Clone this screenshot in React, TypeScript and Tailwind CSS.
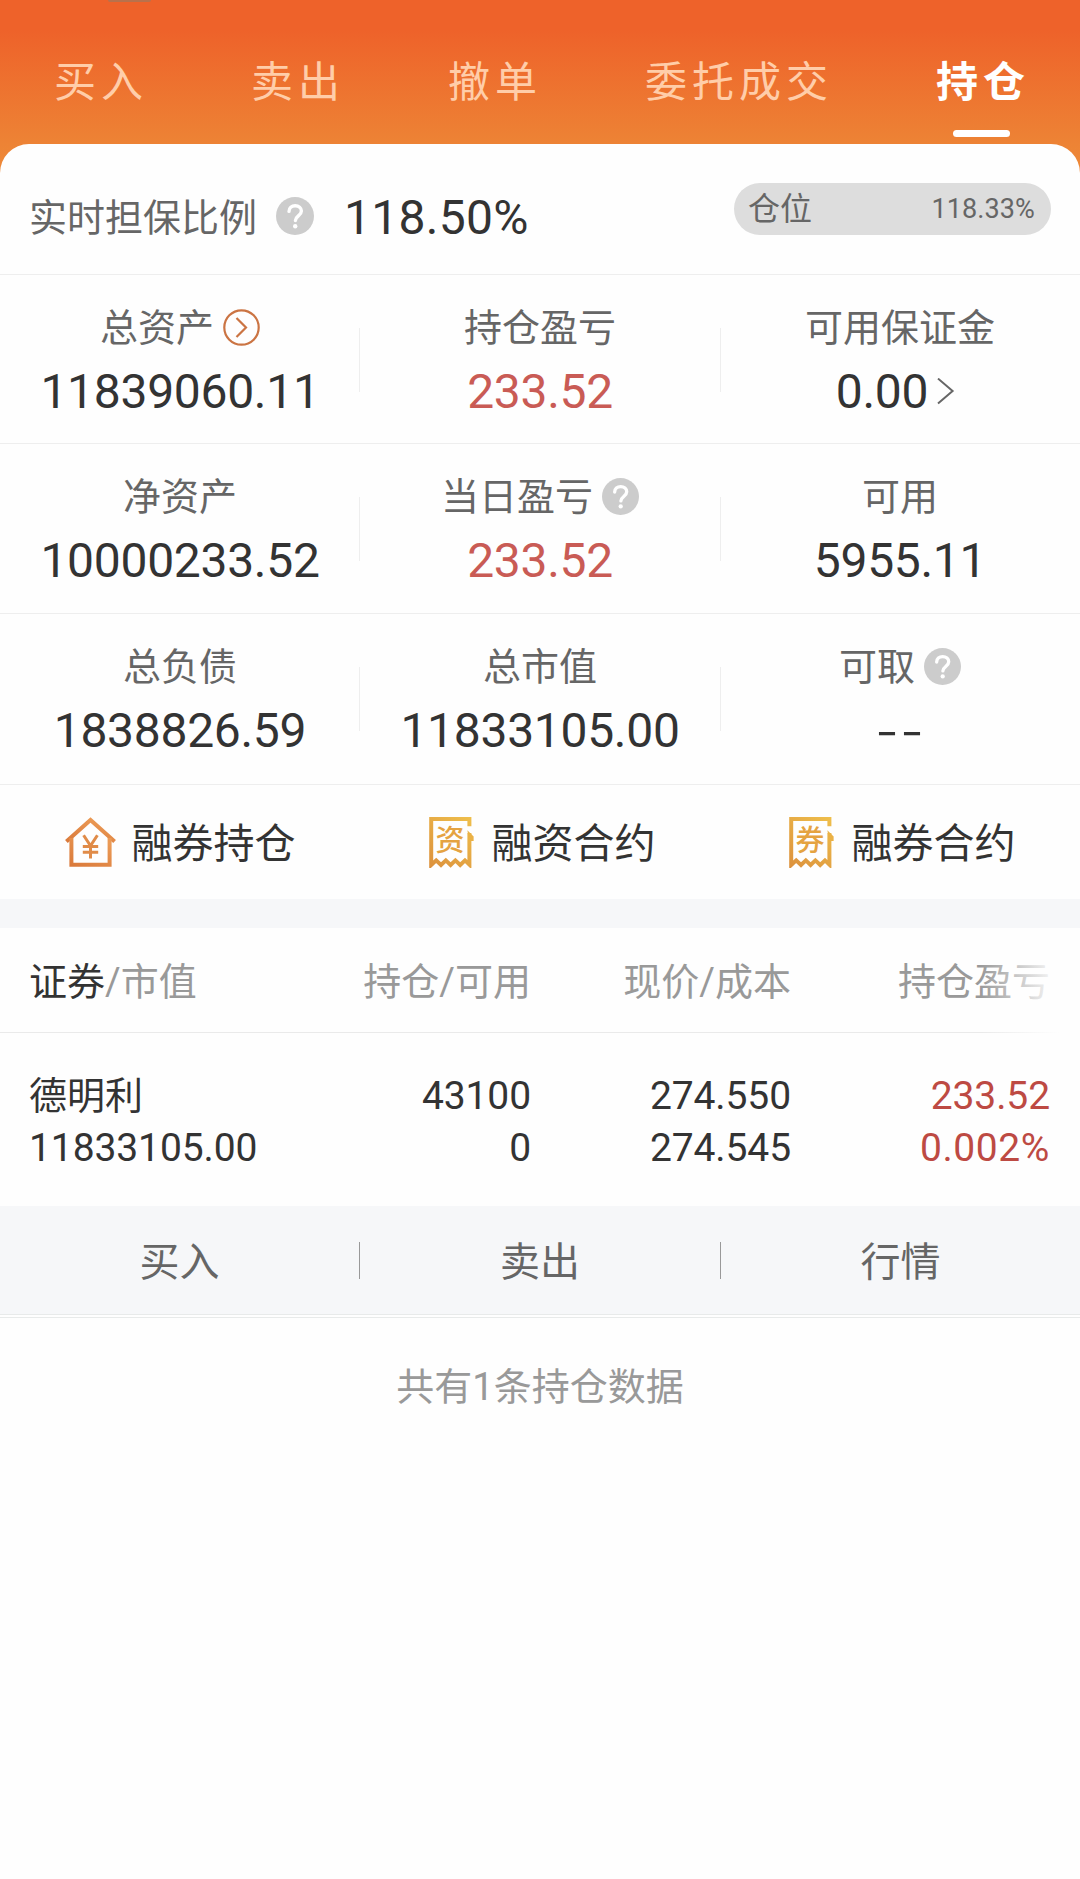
import React, { useState } from 'react';
import classnames from 'clsx';

interface CellType {
  label: string;
  value: string;
  red?: boolean;
  help?: boolean;
  more?: boolean;
  link?: boolean;
}

const tabs = ['买入', '卖出', '撤单', '委托成交', '持仓'];

const assets: { height: string; cells: CellType[] }[] = [
  {
    height: 'h-[169px]',
    cells: [
      { label: '总资产', value: '11839060.11', more: true },
      { label: '持仓盈亏', value: '233.52', red: true },
      { label: '可用保证金', value: '0.00', link: true },
    ],
  },
  {
    height: 'h-[170px]',
    cells: [
      { label: '净资产', value: '10000233.52' },
      { label: '当日盈亏', value: '233.52', red: true, help: true },
      { label: '可用', value: '5955.11' },
    ],
  },
  {
    height: 'h-[171px]',
    cells: [
      { label: '总负债', value: '1838826.59' },
      { label: '总市值', value: '11833105.00' },
      { label: '可取', value: '--', help: true },
    ],
  },
];

const HelpIcon: React.FC<{ className: string }> = ({ className }) => (
  <svg className={classnames('shrink-0', className)} viewBox="0 0 38 38" fill="none">
    <circle cx="19" cy="19" r="19" fill="#cccccc" />
    <path
      d="M13 14.4c0-3.4 2.7-5.6 6.2-5.6s6.2 2.2 6.2 5.3c0 4.6-6 5-6 9.4"
      stroke="#fff"
      strokeWidth="3.4"
      strokeLinecap="round"
    />
    <circle cx="19.2" cy="29.2" r="2.2" fill="#fff" />
  </svg>
);

const MoreIcon: React.FC = () => (
  <svg className="-mt-px size-[37px] shrink-0" viewBox="0 0 37 37" fill="none" stroke="#cb7443" strokeWidth="2.2">
    <circle cx="18.5" cy="18.5" r="17.2" />
    <path d="M13.5 9l9.5 9.5-9.5 9.5" />
  </svg>
);

const HouseIcon: React.FC = () => (
  <svg className="size-[51px] shrink-0" viewBox="0 0 51 51" fill="none">
    <defs>
      <linearGradient id="house" x1="0.7" y1="0" x2="0" y2="1">
        <stop offset="0" stopColor="#eb9a55" />
        <stop offset="1" stopColor="#da7a3b" />
      </linearGradient>
    </defs>
    <g stroke="url(#house)" strokeWidth="4">
      <path d="M1.4 24.6L25.5 3l24.1 21.6" />
      <path d="M6.4 21v26.8h38.2V21" />
    </g>
    <path
      d="M18.6 18.2l6.9 10.6 6.9-10.6M25.5 28v13.6M17.8 29.4h15.4M17.8 35.2h15.4"
      stroke="#e08b48"
      strokeWidth="3"
    />
  </svg>
);

const BillIcon: React.FC<{ text: string }> = ({ text }) => (
  <svg className="size-[51px] shrink-0" viewBox="0 0 51 51" fill="none">
    <defs>
      <linearGradient id="bill" gradientUnits="userSpaceOnUse" x1="46" y1="0" x2="4" y2="50">
        <stop offset="0" stopColor="#efbf4c" />
        <stop offset="1" stopColor="#dc913c" />
      </linearGradient>
    </defs>
    <path
      d="M44.4 9.2V2H6.2V48L11.2 43.4L16 48L20.8 43.4L25.6 48L30.4 43.4L35.2 48L40 43.4L44.4 47.6V16"
      stroke="url(#bill)"
      strokeWidth="4"
    />
    <path d="M42.4 13.2L48.6 19.4V24H44Z" fill="#eab146" />
    <text
      x="25"
      y="34"
      textAnchor="middle"
      className="font-['Noto_Sans_CJK_SC',sans-serif] text-[29px] font-medium"
      fill="#e5a341"
    >
      {text}
    </text>
  </svg>
);

const AssetCell: React.FC<{ cell: CellType }> = ({ cell }) => (
  <div className="flex w-[360px] flex-col items-center pt-[34px]">
    <div className="flex h-[38px] items-center gap-[9px] text-[38px] leading-[38px] text-[#666]">
      <span>{cell.label}</span>
      {cell.more && <MoreIcon />}
      {cell.help && <HelpIcon className="-mt-[2px] size-[37px]" />}
    </div>
    <div
      className={classnames('mt-[20px] flex h-[50px] items-center leading-[50px]', {
        'text-[#c95b55]': cell.red,
        'text-[#333]': !cell.red,
        "font-['Inter',sans-serif] text-[53px] font-light tracking-[1px]": cell.value === '--',
        'text-[48px] tracking-[-0.3px]': cell.value !== '--',
        'pr-[9px]': cell.link,
      })}
    >
      {cell.value}
      {cell.link && (
        <svg className="ml-[9px] h-[28px] w-[18px]" viewBox="0 0 18 28" fill="none">
          <path d="M1 0.6L15.6 13 1 25.4" stroke="#666" strokeWidth="2" />
        </svg>
      )}
    </div>
  </div>
);

const App: React.FC = () => {
  const [active, setActive] = useState('持仓');

  return (
    <div className="h-[1879px] w-[1080px] overflow-hidden bg-[#fefefe] font-['Roboto','Noto_Sans_CJK_SC',sans-serif]">
      {/* tabs */}
      <div className="relative h-[174px] bg-[linear-gradient(180deg,#ee622a_0px,#ee622a_30px,#ed8335_144px,#ee8a38_174px)]">
        <div className="absolute top-0 left-[108px] h-[2px] w-[43px] rounded-b bg-[#b9714c]" />
        <div className="flex gap-[103px] pl-[54px]">
          {tabs.map((tab) => (
            <button
              key={tab}
              className={classnames('relative h-[144px] pt-[20px] text-[42px] tracking-[5px] whitespace-nowrap', {
                'font-bold text-white': tab === active,
                'text-[#ffcda9]': tab !== active,
              })}
              onClick={() => setActive(tab)}
            >
              {tab}
              {tab === active && (
                <div className="absolute top-[130px] left-[17px] h-[7px] w-[57px] rounded-full bg-white" />
              )}
            </button>
          ))}
        </div>
      </div>

      {/* summary */}
      <div className="relative -mt-[30px] rounded-t-[29px] bg-[#fefefe]">
        <div className="flex h-[131px] items-start border-b border-[#eee] pr-[29px] pl-[29px]">
          <div className="mt-[55px] flex h-[38px] items-center">
            <span className="text-[38px] leading-[38px] text-[#666]">实时担保比例</span>
            <HelpIcon className="-mt-[4px] ml-[19px] size-[38px]" />
            <span className="ml-[30px] text-[48px] leading-[48px] tracking-[0.3px] text-[#333]">118.50%</span>
          </div>
          <div className="mt-[39px] ml-auto flex h-[52px] w-[317px] items-center justify-between rounded-full bg-[#ddd] pr-[16px] pl-[14px] text-[#666]">
            <span className="text-[32px] leading-[50px]">仓位</span>
            <span className="text-[27px] leading-[50px] tracking-[0.1px]">118.33%</span>
          </div>
        </div>

        {assets.map((row) => (
          <div key={row.cells[0].label} className={classnames('flex border-b border-[#eee]', row.height)}>
            <AssetCell cell={row.cells[0]} />
            <div className="mt-[53px] -ml-px h-[64px] w-px bg-[#eee]" />
            <AssetCell cell={row.cells[1]} />
            <div className="mt-[53px] -mr-px h-[64px] w-px bg-[#eee]" />
            <AssetCell cell={row.cells[2]} />
          </div>
        ))}

        <div className="grid h-[114px] grid-cols-3 text-[41px] text-[#333]">
          <div className="flex items-center justify-center gap-[16px]">
            <HouseIcon />
            <span className="pt-[5px]">融券持仓</span>
          </div>
          <div className="flex items-center justify-center gap-[16px]">
            <BillIcon text="资" />
            <span className="pt-[5px]">融资合约</span>
          </div>
          <div className="flex items-center justify-center gap-[16px]">
            <BillIcon text="券" />
            <span className="pt-[5px]">融券合约</span>
          </div>
        </div>
      </div>

      <div className="h-[29px] bg-[#f6f7f9]" />

      {/* holdings */}
      <div className="relative flex h-[105px] items-center border-b border-[#eaeaea] pt-[3px] pl-[29px] text-[38px] leading-[38px] whitespace-nowrap text-[#999]">
        <div className="w-[242px]">
          <span className="text-[#333]">证券</span>/市值
        </div>
        <div className="w-[260px] text-right">持仓/可用</div>
        <div className="w-[260px] text-right">现价/成本</div>
        <div className="w-[259px] text-right">持仓盈亏</div>
        <div className="absolute top-0 right-0 -bottom-px w-[100px] bg-[linear-gradient(90deg,transparent,#fefefe_80px)]" />
      </div>
      <div className="flex h-[173px] pt-[37px] pl-[29px] text-[39px] leading-[52px] tracking-[-0.1px] text-[#333]">
        <div className="w-[242px]">
          <div className="text-[38px] tracking-normal">德明利</div>
          <div>11833105.00</div>
        </div>
        <div className="w-[260px] text-right">
          <div>43100</div>
          <div>0</div>
        </div>
        <div className="w-[260px] text-right">
          <div>274.550</div>
          <div>274.545</div>
        </div>
        <div className="w-[259px] text-right text-[#bd4a43]">
          <div>233.52</div>
          <div className="tracking-[0.6px]">0.002%</div>
        </div>
      </div>

      {/* row actions */}
      <div className="grid h-[109px] grid-cols-3 items-center border-b border-[#e8eaea] bg-[#f6f7f9] text-center text-[40px] text-[#666]">
        <button className="h-[37px] border-r border-[#999] pt-[2px] leading-[37px]">买入</button>
        <button className="h-[37px] pt-[2px] leading-[37px]">卖出</button>
        <button className="h-[37px] border-l border-[#999] pt-[2px] leading-[37px]">行情</button>
      </div>
      <div className="h-[3px] border-b border-[#e8eaea]" />

      <div className="mt-[49px] text-center text-[38px] leading-[40px] text-[#999]">共有1条持仓数据</div>
    </div>
  );
};

export default App;
